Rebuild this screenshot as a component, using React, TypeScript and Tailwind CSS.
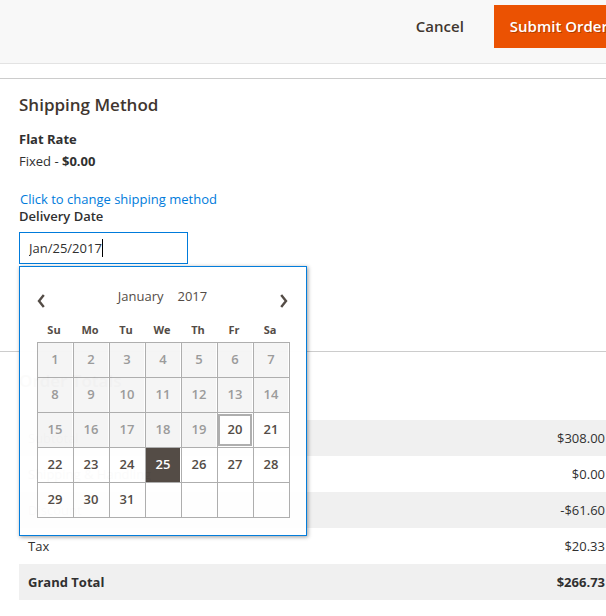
import React from 'react';

const weekdays = ['Su', 'Mo', 'Tu', 'We', 'Th', 'Fr', 'Sa'];
const weeks = [0, 1, 2, 3, 4].map((w) => weekdays.map((_, d) => w * 7 + d + 1));
const today = 20;
const selected = 25;

const totals = [
  { label: 'Subtotal', value: '$308.00' },
  { label: 'Shipping & Handling', value: '$0.00' },
  { label: 'Discount', value: '-$61.60' },
  { label: 'Tax', value: '$20.33' },
  { label: 'Grand Total', value: '$266.73' },
];

function Chevron({ flip = false }: { flip?: boolean }) {
  return (
    <svg viewBox="0 0 8 14" className={flip ? 'h-[14px] w-2 -scale-x-100' : 'h-[14px] w-2'} fill="none" stroke="#514943" strokeWidth="2.4">
      <path d="M6.8 1 2 7l4.8 6" />
    </svg>
  );
}

function Day({ day }: { day: number }) {
  if (day > 31) return <td className="border border-[#adadad]" />;
  const past = day < today;
  let look = 'h-[34px] text-[#514943]';
  if (past) look = 'h-[34px] bg-[#f5f5f5] text-[#9a9a9a]';
  if (day === today) look = 'my-px h-8 border-2 border-[#adadad] text-[#514943]';
  if (day === selected) look = 'h-[34px] bg-[#514943] text-white';
  return (
    <td className="border border-[#adadad] p-0 pr-px">
      <button type="button" disabled={past} className={`block w-full text-center text-[13px] font-semibold ${look}`}>
        {day}
      </button>
    </td>
  );
}

function Calendar() {
  return (
    <div className="absolute top-full left-0 z-10 mt-[2px] w-72 border border-[#007bdb] bg-white pt-5 pr-4 pb-[17px] pl-[17px] text-[#514943] opacity-[0.98] shadow-[1px_1px_4px_rgba(0,0,0,0.4)]">
      <div className="flex h-[26px] items-start justify-between">
        <button type="button" aria-label="Previous month" className="mt-[7px]">
          <Chevron />
        </button>
        <div className="flex gap-[14px] text-[13px] leading-[18px]">
          <span>January</span>
          <span>2017</span>
        </div>
        <button type="button" aria-label="Next month" className="mt-[7px] mr-[2px]">
          <Chevron flip />
        </button>
      </div>
      <table className="w-full table-fixed border-collapse">
        <thead>
          <tr className="h-[29px]">
            {weekdays.map((d) => (
              <th key={d} className="p-0 pt-[6px] pr-[3px] text-[11px] leading-4 font-bold">{d}</th>
            ))}
          </tr>
        </thead>
        <tbody>
          {weeks.map((week) => (
            <tr key={week[0]} className="h-[35px]">
              {week.map((day) => (
                <Day key={day} day={day} />
              ))}
            </tr>
          ))}
        </tbody>
      </table>
    </div>
  );
}

export default function App() {
  return (
    <div className="min-h-screen overflow-hidden bg-white font-['Open_Sans','Noto_Sans',sans-serif] text-[13px] text-[#303030]">
      <header className="flex h-16 items-start justify-end border-b border-[#e3e3e3] bg-[#f8f8f8] pt-[5px]">
        <button type="button" className="h-[43px] px-[30px] text-[15px] font-semibold text-[#41362f]">
          Cancel
        </button>
        <button type="button" className="-mr-[18px] h-[43px] shrink-0 bg-[#eb5202] px-4 text-[15px] font-semibold whitespace-nowrap text-white [text-shadow:1px_1px_0_rgba(0,0,0,0.25)]">
          Submit Order
        </button>
      </header>
      <main className="mt-[14px]">
        <section className="h-[273px] border-t border-[#cccccc] pt-[14px] pl-[19px]">
          <h2 className="text-[17px] leading-6 font-semibold text-[#41362f]">Shipping Method</h2>
          <div className="mt-[11px] leading-[22px]">
            <h3 className="font-bold">Flat Rate</h3>
            <p>
              Fixed - <strong>$0.00</strong>
            </p>
          </div>
          <a href="#shipping" className="mt-[19px] ml-px block leading-[17px] text-[#007bdb]">
            Click to change shipping method
          </a>
          <label htmlFor="delivery-date" className="block leading-[17px] font-semibold">
            Delivery Date
          </label>
          <div className="relative mt-[7px] w-[169px]">
            <input
              id="delivery-date"
              type="text"
              defaultValue="Jan/25/2017"
              className="block h-8 w-full border border-[#007bdb] bg-white px-[9px] text-[13px] outline-none"
            />
            <span className="absolute top-[7px] left-[83px] h-[18px] w-px bg-black" />
            <Calendar />
          </div>
        </section>
        <section className="border-t border-[#cccccc] pt-[17px] pl-[19px]">
          <h2 className="text-[17px] leading-6 font-semibold text-[#41362f]">Order Totals</h2>
          <table className="mt-[27px] w-full border-collapse">
            <tbody>
              {totals.map((row) => (
                <tr key={row.label} className="h-9 odd:bg-[#f0f0f0] last:font-bold">
                  <td className="p-0 pt-[2px] pl-[9px]">{row.label}</td>
                  <td className="p-0 pt-[2px] pr-px text-right">{row.value}</td>
                </tr>
              ))}
            </tbody>
          </table>
        </section>
      </main>
    </div>
  );
}
